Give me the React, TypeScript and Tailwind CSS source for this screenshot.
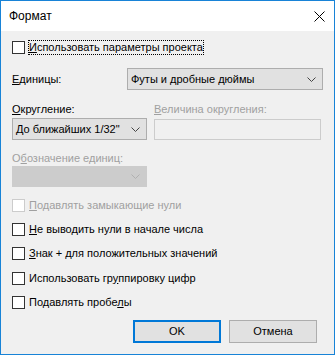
import React from 'react';

const Chevron: React.FC<{ color?: string }> = ({ color = '#444' }) => (
  <svg width="9" height="5" viewBox="0 0 9 5" fill="none">
    <path d="M0.5 0.5 L4.5 4.5 L8.5 0.5" stroke={color} strokeWidth="1" />
  </svg>
);

const Box: React.FC<{ disabled?: boolean }> = ({ disabled }) => (
  <span
    className={
      'w-[13px] h-[13px] shrink-0 border bg-white ' +
      (disabled ? 'border-[#cccccc]' : 'border-[#333333]')
    }
  />
);

const Check: React.FC<{
  before?: string;
  mark: string;
  after: string;
  disabled?: boolean;
  focused?: boolean;
  className?: string;
}> = ({ before = '', mark, after, disabled, focused, className = '' }) => (
  <div className={'flex items-center h-[14px] ' + className}>
    <Box disabled={disabled} />
    <span
      className={
        'ml-[3px] leading-[13px] ' +
        (focused ? 'border border-dotted border-black ' : 'border border-transparent ') +
        (disabled ? 'text-[#a0a0a0]' : 'text-black')
      }
    >
      {before}
      <span className="underline underline-offset-[1px]">{mark}</span>
      {after}
    </span>
  </div>
);

export default function App() {
  return (
    <div className="w-[335px] h-[355px] border border-[#1883d7] flex flex-col whitespace-nowrap font-['Liberation_Sans',Arial,sans-serif] text-[11px] text-black">
      <div className="h-[30px] bg-white flex items-center justify-between pl-[8px] pr-[9px] text-[12px]">
        <span>Формат</span>
        <svg width="11" height="11" viewBox="0 0 11 11" fill="none">
          <path d="M0.5 0.5 L10.5 10.5 M10.5 0.5 L0.5 10.5" stroke="#000" strokeWidth="1" />
        </svg>
      </div>
      <div className="flex-1 bg-[#f0f0f0] flex flex-col pl-[11px] pr-[11px]">
        <Check mark="И" after="спользовать параметры проекта" focused className="mt-[9px]" />

        <div className="flex items-center mt-[14px]">
          <span className="w-[115px]">
            <span className="underline underline-offset-[1px]">Е</span>диницы:
          </span>
          <div className="w-[196px] h-[22px] border border-[#adadad] bg-[#e1e1e1] flex items-center justify-between pl-[3px] pr-[6px]">
            <span>Футы и дробные дюймы</span>
            <Chevron />
          </div>
        </div>

        <div className="flex mt-[11px]">
          <div className="flex flex-col w-[142px]">
            <span className="h-[16px] leading-[16px]">
              <span className="underline underline-offset-[1px]">О</span>кругление:
            </span>
            <div className="mt-[1px] w-[135px] h-[22px] border border-[#adadad] bg-[#e1e1e1] flex items-center justify-between pl-[3px] pr-[6px]">
              <span>До ближайших 1/32"</span>
              <Chevron />
            </div>
          </div>
          <div className="flex flex-col">
            <span className="h-[16px] leading-[16px] text-[#a0a0a0]">
              <span className="underline underline-offset-[1px]">В</span>еличина округления:
            </span>
            <div className="mt-[2px] w-[167px] h-[21px] border border-[#cccccc] bg-[#f0f0f0]" />
          </div>
        </div>

        <span className="mt-[10px] h-[16px] leading-[16px] text-[#a0a0a0]">
          О<span className="underline underline-offset-[1px]">б</span>означение единиц:
        </span>
        <div className="w-[135px] h-[21px] border border-[#cccccc] bg-[#cccccc] flex items-center justify-end pr-[6px]">
          <Chevron color="#b0b0b0" />
        </div>

        <Check mark="П" after="одавлять замыкающие нули" disabled className="mt-[11px]" />
        <Check mark="Н" after="е выводить нули в начале числа" className="mt-[10px]" />
        <Check mark="З" after="нак + для положительных значений" className="mt-[10px]" />
        <Check before="Использовать гр" mark="у" after="ппировку цифр" className="mt-[11px]" />
        <Check before="Подавлять пробе" mark="л" after="ы" className="mt-[10px]" />

        <div className="flex justify-end gap-[8px] mt-[11px] pr-[6px]">
          <div className="w-[88px] h-[23px] border-2 border-[#0078d7] bg-[#e1e1e1] flex items-center justify-center">
            OK
          </div>
          <div className="w-[88px] h-[23px] border border-[#adadad] bg-[#e1e1e1] flex items-center justify-center">
            Отмена
          </div>
        </div>
      </div>
    </div>
  );
}
